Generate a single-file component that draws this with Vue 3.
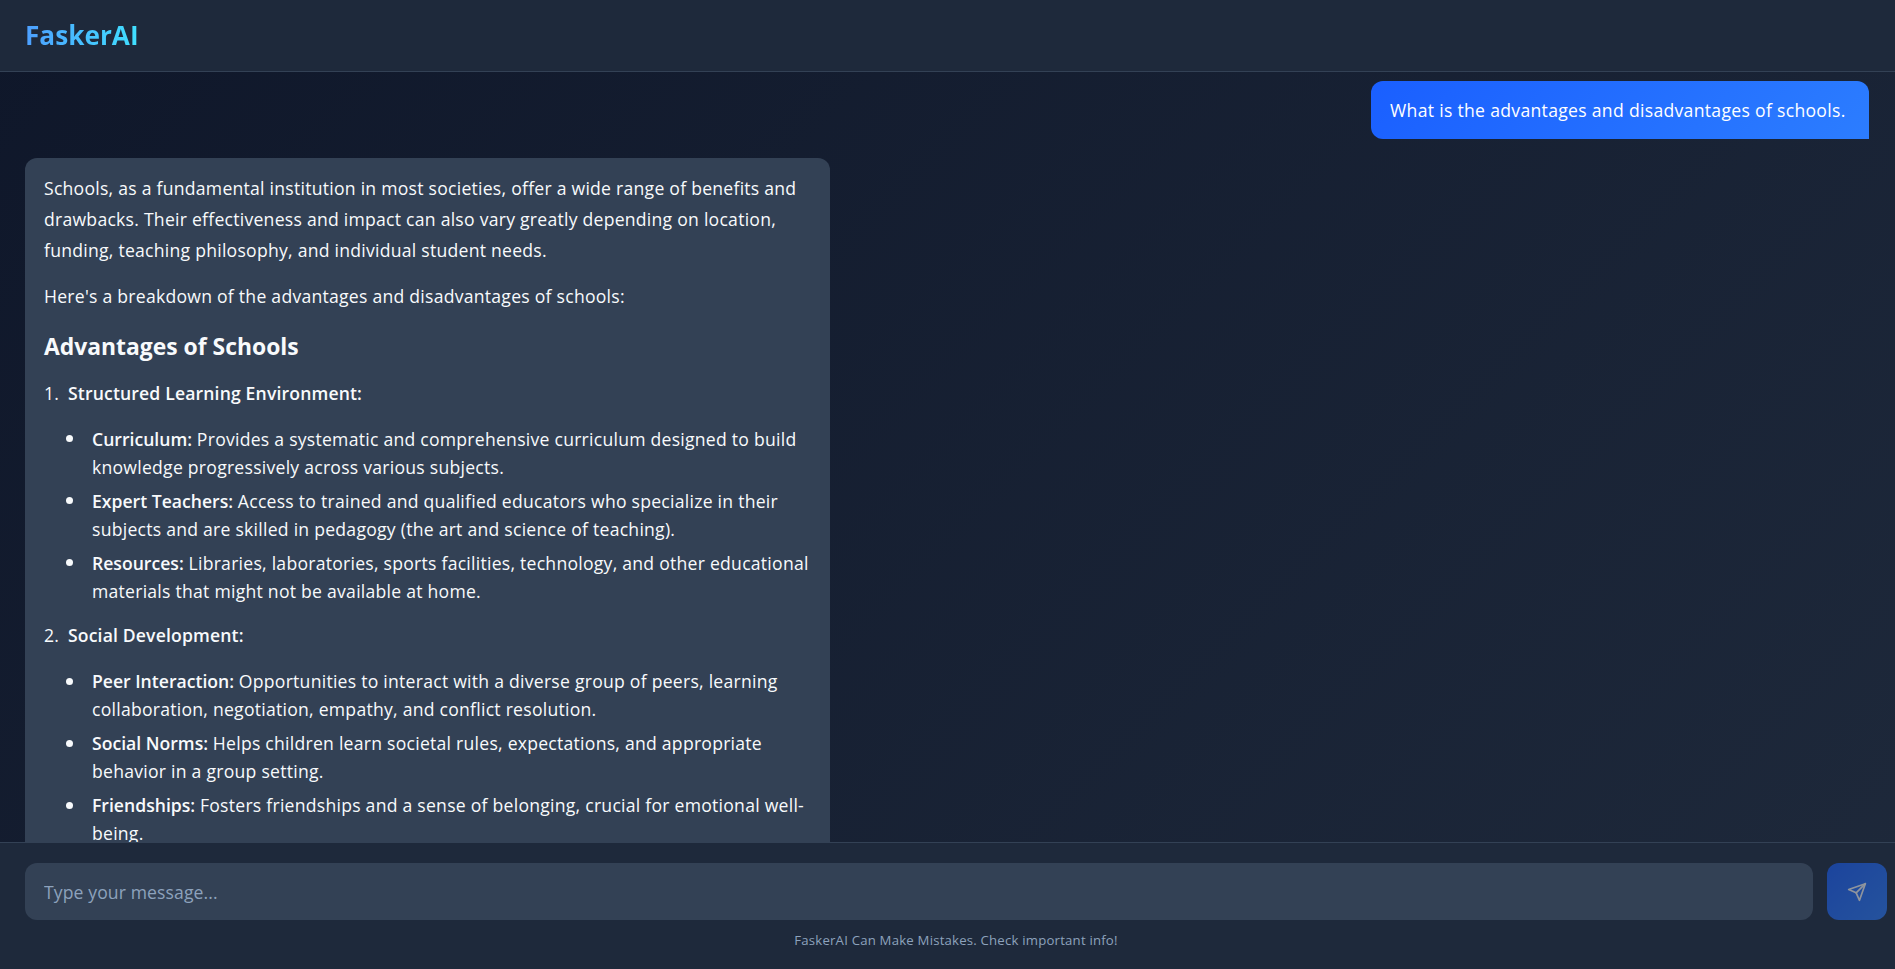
<template>
  <div class="app">
    <header class="top">
      <h1 class="logo">FaskerAI</h1>
    </header>

    <main class="chat">
      <div class="msg user">What is the advantages and disadvantages of schools.</div>
      <div class="msg ai">
        <p>Schools, as a fundamental institution in most societies, offer a wide range of benefits and drawbacks. Their effectiveness and impact can also vary greatly depending on location, funding, teaching philosophy, and individual student needs.</p>
        <p>Here's a breakdown of the advantages and disadvantages of schools:</p>
        <h3>Advantages of Schools</h3>
        <template v-for="(sec, i) in sections" :key="sec.title">
          <p class="num"><span class="n">{{ i + 1 }}.</span><strong>{{ sec.title }}</strong></p>
          <ul>
            <li v-for="it in sec.items" :key="it.k"><strong>{{ it.k }}</strong> {{ it.v }}</li>
          </ul>
        </template>
      </div>
    </main>

    <footer class="bottom">
      <div class="input-row">
        <input class="input" type="text" placeholder="Type your message...">
        <button class="send" aria-label="Send">
          <svg width="20" height="20" viewBox="0 0 24 24" fill="none" stroke="currentColor" stroke-width="2" stroke-linecap="round" stroke-linejoin="round">
            <path d="M22 2 11 13" />
            <path d="M22 2 15 22 11 13 2 9 22 2z" />
          </svg>
        </button>
      </div>
      <p class="note">FaskerAI Can Make Mistakes. Check important info!</p>
    </footer>
  </div>
</template>

<script setup>
const sections = [
  {
    title: 'Structured Learning Environment:',
    items: [
      { k: 'Curriculum:', v: 'Provides a systematic and comprehensive curriculum designed to build knowledge progressively across various subjects.' },
      { k: 'Expert Teachers:', v: 'Access to trained and qualified educators who specialize in their subjects and are skilled in pedagogy (the art and science of teaching).' },
      { k: 'Resources:', v: 'Libraries, laboratories, sports facilities, technology, and other educational materials that might not be available at home.' },
    ],
  },
  {
    title: 'Social Development:',
    items: [
      { k: 'Peer Interaction:', v: 'Opportunities to interact with a diverse group of peers, learning collaboration, negotiation, empathy, and conflict resolution.' },
      { k: 'Social Norms:', v: 'Helps children learn societal rules, expectations, and appropriate behavior in a group setting.' },
      { k: 'Friendships:', v: 'Fosters friendships and a sense of belonging, crucial for emotional well-being.' },
    ],
  },
]
</script>

<style>
html, body { margin: 0; height: 100%; background: #1e293b; }
</style>

<style scoped>
* { box-sizing: border-box; }
.app {
  height: 100vh;
  display: flex;
  flex-direction: column;
  overflow: hidden;
  font-family: "Open Sans", "Noto Sans", sans-serif;
  color: #f8fafc;
  background: linear-gradient(135deg, #0f172a, #1e293b);
}
.top {
  flex: none;
  height: 72px;
  padding: 0 25px 2px;
  display: flex;
  align-items: center;
  background: #1e293b;
  border-bottom: 1px solid #334155;
}
.logo {
  margin: 0;
  font-size: 26.2px;
  font-weight: 700;
  background: linear-gradient(90deg, #4d9fff, #40e0ff);
  -webkit-background-clip: text;
  background-clip: text;
  color: transparent;
}
.chat {
  flex: 1;
  min-height: 0;
  overflow: hidden;
  padding: 9px 26px 9px 25px;
  display: flex;
  flex-direction: column;
  gap: 19px;
}
.msg { flex: none; font-size: 17.6px; line-height: 1.75; letter-spacing: 0.25px; }
.user {
  align-self: flex-end;
  width: 498px;
  height: 58px;
  padding: 15px 19px;
  line-height: 1.6;
  letter-spacing: 0.3px;
  white-space: nowrap;
  color: #fff;
  background: linear-gradient(135deg, #1a5fff, #2c7dff);
  border-radius: 12px 12px 0 12px;
}
.ai {
  width: 805px;
  padding: 15px 19px;
  background: #334155;
  border-radius: 12px 12px 12px 0;
}
.ai p { margin: 0 0 16px; }
.ai strong { font-weight: 600; letter-spacing: 0; }
.ai .num strong { letter-spacing: 0.15px; }
.ai h3 { margin: 0 0 12px; font-size: 22.88px; line-height: 38px; font-weight: 700; letter-spacing: 0; }
.n { display: inline-block; width: 24px; }
.ai ul { margin: 0 0 15.5px; padding: 0 0 0 48px; list-style: none; }
.ai li { position: relative; line-height: 28px; }
.ai li + li { margin-top: 6px; }
.ai li::before {
  content: "";
  position: absolute;
  left: -26px;
  top: 10.5px;
  width: 7px;
  height: 7px;
  border-radius: 50%;
  background: #f8fafc;
}
.bottom {
  flex: none;
  height: 127px;
  padding: 20px 8px 0 25px;
  background: #1e293b;
  border-top: 1px solid #334155;
}
.input-row { display: flex; gap: 14px; }
.input {
  flex: 1;
  height: 57px;
  padding: 0 19px;
  border: none;
  outline: none;
  border-radius: 12px;
  background: #334155;
  color: #f8fafc;
  font: inherit;
  font-size: 17.6px;
  letter-spacing: 0.1px;
}
.input::placeholder { color: #8da2bc; }
.send {
  flex: none;
  width: 60px;
  height: 57px;
  border: none;
  border-radius: 12px;
  display: flex;
  align-items: center;
  justify-content: center;
  color: #fff;
  background: linear-gradient(135deg, #1a5fff, #2c7dff);
  opacity: 0.5;
}
.note {
  margin: 11px 0 0;
  text-align: center;
  font-size: 13.2px;
  letter-spacing: 0.2px;
  color: #8da2bc;
}
</style>
